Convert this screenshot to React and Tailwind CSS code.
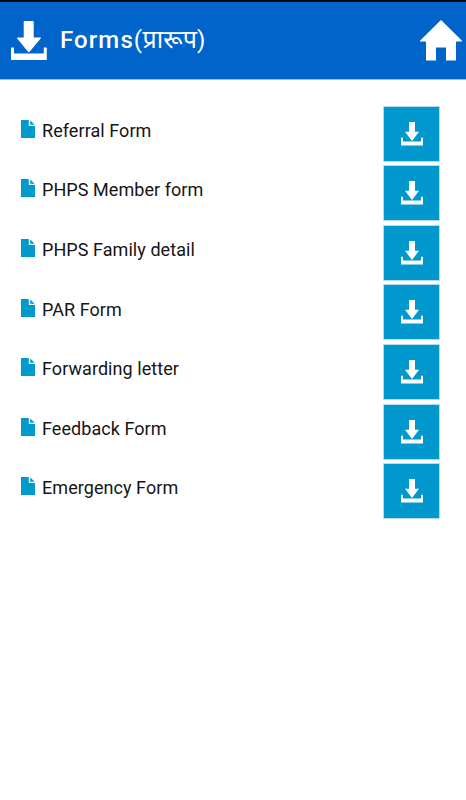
const forms = [
  "Referral Form",
  "PHPS Member form",
  "PHPS Family detail",
  "PAR Form",
  "Forwarding letter",
  "Feedback Form",
  "Emergency Form",
];

function DownloadIcon({ className }) {
  return (
    <svg viewBox="0 0 36 40" preserveAspectRatio="none" fill="currentColor" className={className}>
      <path d="M12.7 0.5Q12.7 0 13.2 0H22.2Q22.7 0 22.7 0.5V16.5H29.3Q30.5 16.5 29.7 17.5L18.8 30.4Q17.8 31.4 16.8 30.4L6.2 17.5Q5.4 16.5 6.6 16.5H12.7Z" />
      <path d="M0.6 26.5H2.4Q3 26.5 3 27.1V32.5H32.8V27.1Q32.8 26.5 33.4 26.5H35.2Q35.8 26.5 35.8 27.1V38.4Q35.8 39 35.2 39H0.6Q0 39 0 38.4V27.1Q0 26.5 0.6 26.5Z" />
    </svg>
  );
}

function SmallDownloadIcon() {
  return (
    <svg viewBox="0 0 22 24" fill="currentColor" className="h-6 w-[22px]">
      <path d="M8 0H14V9.8H18L11 19L4 9.8H8Z" />
      <path d="M0 15.7H2V19.6H20V15.7H22V23.5H0Z" />
    </svg>
  );
}

function HomeIcon() {
  return (
    <svg viewBox="0 0 42 41" fill="currentColor" className="h-[41px] w-[42px]">
      <path d="M21 0L42 20.7V21.5H36V40.4H26V27.4H16V40.4H6V21.5H0V20.7Z" />
    </svg>
  );
}

function FileIcon() {
  return (
    <svg viewBox="0 0 14 18" fill="currentColor" className="h-[18px] w-[14px]">
      <path d="M0 0H7.8V6H14V18H0Z" />
      <path d="M9.2 0.6L13.7 4.7H9.2Z" />
    </svg>
  );
}

export default function App() {
  return (
    <div className="min-h-screen w-full bg-white font-['Roboto','Noto_Sans',sans-serif]">
      <header className="flex h-20 items-start justify-between border-t-2 border-b border-t-[#020812] border-b-[#8fc3f7] bg-[#0064cb] pr-1 pl-[11px] text-white">
        <div className="flex items-start">
          <DownloadIcon className="mt-[19px] h-10 w-9" />
          <h1 className="mt-[22px] ml-3 text-2xl leading-8 font-medium tracking-[1.1px] whitespace-nowrap">
            <span className="ml-px">Forms</span>
            <span className="font-normal tracking-[0.5px]">(</span>
            <span className="text-[25px] leading-8 font-normal tracking-normal">प्रारूप</span>
            <span className="font-normal">)</span>
          </h1>
        </div>
        <div className="mt-[18px]">
          <HomeIcon />
        </div>
      </header>
      <ul className="pt-[25.6px] pr-[26px] pl-[21px]">
        {forms.map((name) => (
          <li key={name} className="flex h-[59.6px] items-start justify-between">
            <div className="flex items-start text-[#009acd]">
              <span className="mt-[14.2px]">
                <FileIcon />
              </span>
              <span className="mt-[13.2px] ml-[7px] text-lg leading-6 tracking-[0.06px] text-[#151515]">{name}</span>
            </div>
            <button className="flex h-14 w-[57px] items-center justify-center border border-[#b5dceb] bg-[#0098cd] pl-px text-white">
              <SmallDownloadIcon />
            </button>
          </li>
        ))}
      </ul>
    </div>
  );
}
